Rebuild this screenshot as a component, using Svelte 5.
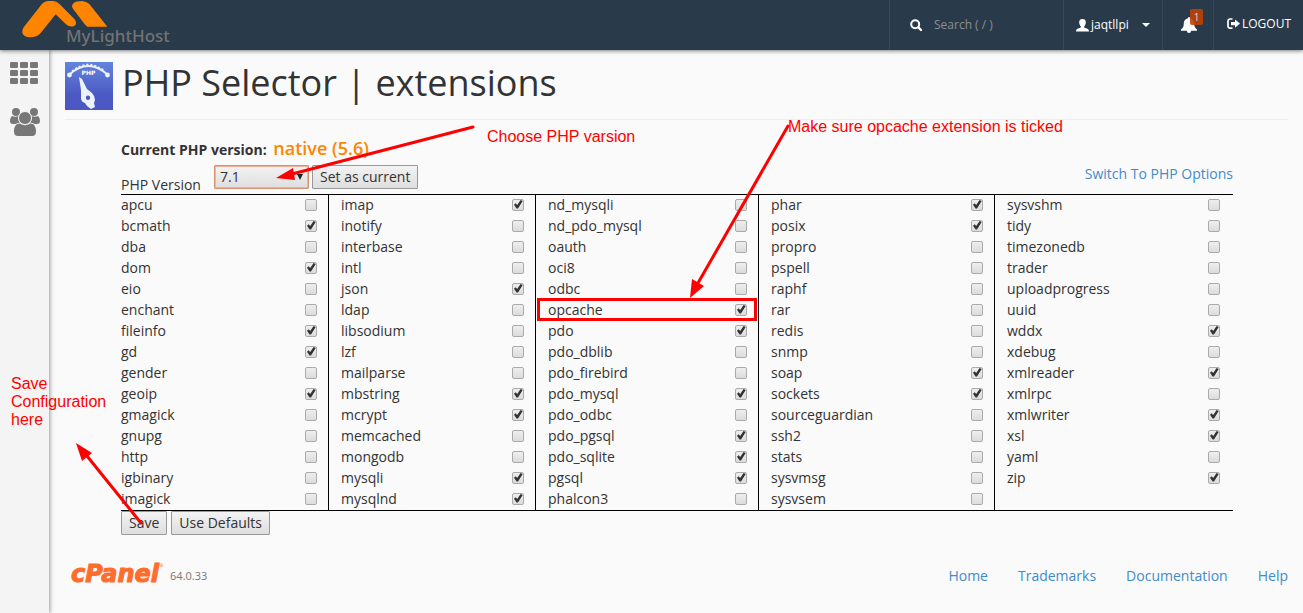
<!--
    PHP Selector page: pick a PHP version, tick its extensions, save.
    The red notes on top walk the reader through the three steps.
-->
<script lang="ts">
    const COLUMNS: string[][] = [
        ["apcu", "bcmath", "dba", "dom", "eio", "enchant", "fileinfo", "gd", "gender", "geoip", "gmagick", "gnupg", "http", "igbinary", "imagick"],
        ["imap", "inotify", "interbase", "intl", "json", "ldap", "libsodium", "lzf", "mailparse", "mbstring", "mcrypt", "memcached", "mongodb", "mysqli", "mysqlnd"],
        ["nd_mysqli", "nd_pdo_mysql", "oauth", "oci8", "odbc", "opcache", "pdo", "pdo_dblib", "pdo_firebird", "pdo_mysql", "pdo_odbc", "pdo_pgsql", "pdo_sqlite", "pgsql", "phalcon3"],
        ["phar", "posix", "propro", "pspell", "raphf", "rar", "redis", "snmp", "soap", "sockets", "sourceguardian", "ssh2", "stats", "sysvmsg", "sysvsem"],
        ["sysvshm", "tidy", "timezonedb", "trader", "uploadprogress", "uuid", "wddx", "xdebug", "xmlreader", "xmlrpc", "xmlwriter", "xsl", "yaml", "zip"]
    ]

    const DEFAULTS = [
        "bcmath", "dom", "fileinfo", "gd", "geoip",
        "imap", "json", "mbstring", "mcrypt", "mysqli", "mysqlnd",
        "opcache", "pdo", "pdo_mysql", "pdo_pgsql", "pdo_sqlite", "pgsql",
        "phar", "posix", "soap", "sockets",
        "wddx", "xmlreader", "xmlwriter", "xsl", "zip"
    ]

    const FOOTER_LINKS = ["Home", "Trademarks", "Documentation", "Help"]

    let version = $state("7.1")
    let enabled: string[] = $state([...DEFAULTS])

    function useDefaults(): void {
        enabled = [...DEFAULTS]
    }
</script>

<div class="page">
    <header class="topbar">
        <a class="brand" href="#home" aria-label="MyLightHost">
            <svg width="90" height="40" viewBox="0 0 270 120" aria-hidden="true">
                <path d="M4 83 58 14Q67 3 80 3H94Q106 4 113 13L158 58Q168 72 155 79 142 82 132 73L101 43 56 99Q45 112 24 112 5 111 1 98 0 90 4 83Z" />
                <path d="M153 26Q146 16 156 8 163 3 180 3 194 4 202 12L256 80H196Q188 74 183 66Z" />
            </svg>
            <span>MyLightHost</span>
        </a>
        <div class="tools">
            <label class="search">
                <svg width="13" height="13" viewBox="0 0 13 13" aria-hidden="true">
                    <circle cx="5.2" cy="5.2" r="4" fill="none" stroke="#fff" stroke-width="2" />
                    <path d="M8.5 8.5 11 11" stroke="#fff" stroke-width="2.4" stroke-linecap="round" />
                </svg>
                <input type="text" placeholder="Search ( / )" aria-label="Search" />
            </label>
            <button type="button" class="user">
                <svg width="13" height="13" viewBox="0 0 13 13" aria-hidden="true">
                    <path fill="#fff" d="M6.5 0C9 0 10 1.5 9.8 3.8 9.7 5.4 9 6.6 8.2 7.3V8.5L12 10Q13 10.5 13 12.5H0Q0 10.5 1 10L4.8 8.5V7.3C4 6.6 3.3 5.4 3.2 3.8 3 1.5 4 0 6.5 0Z" />
                </svg>
                <span>jaqtllpi</span>
                <svg class="caret" width="8" height="4" viewBox="0 0 8 4" aria-hidden="true"><path fill="#fff" d="M0 0H8L4 4Z" /></svg>
            </button>
            <button type="button" class="bell" aria-label="Notifications">
                <svg width="16" height="16" viewBox="0 0 16 16" aria-hidden="true">
                    <path fill="#fff" d="M8 0Q9 0 9 1.2C12 1.8 13.2 4 13.2 6.5 13.2 9.5 14 11 16 12.5V13.7H0V12.5C2 11 2.8 9.5 2.8 6.5 2.8 4 4 1.8 7 1.2Q7 0 8 0ZM5.8 13.5H10.2Q10 16 8 16T5.8 13.5Z" />
                </svg>
                <span class="count">1</span>
            </button>
            <a class="logout" href="#logout">
                <svg width="13" height="12" viewBox="0 0 13 12" aria-hidden="true">
                    <path fill="none" stroke="#fff" stroke-width="1.7" d="M5.5 1H3.3Q1 1 1 3.3V8Q1 10.2 3.3 10.2H5.5" />
                    <path fill="#fff" d="M4 4H8V1.4L13 5.6 8 9.8V7.2H4Z" />
                </svg>
                <span>LOGOUT</span>
            </a>
        </div>
    </header>

    <div class="body">
        <nav class="sidebar">
            <a href="#home" aria-label="Home">
                <svg width="28" height="22" viewBox="0 0 28 22" aria-hidden="true">
                    {#each [0, 8, 16] as y}
                        {#each [0, 10, 20] as x}
                            <rect {x} {y} width="8" height="6" rx="1.3" />
                        {/each}
                    {/each}
                </svg>
            </a>
            <a href="#users" aria-label="User manager">
                <svg width="30" height="28" viewBox="0 0 30 28" aria-hidden="true">
                    <circle cx="6" cy="4" r="4" />
                    <circle cx="24" cy="4" r="4" />
                    <path d="M2 8Q5 9.5 8.5 8C8 11 8.5 13 10 14.5Q7 14.5 5.5 16H3Q0 16 0 13 0 9.5 2 8ZM28 8Q25 9.5 21.5 8C22 11 21.5 13 20 14.5Q23 14.5 24.5 16H27Q30 16 30 13 30 9.5 28 8Z" />
                    <circle cx="15" cy="10" r="6.5" stroke="#f4f4f4" />
                    <path d="M9.5 15.5Q15 19 20.5 15.5C24 15.5 26 19 26 23.5Q26 28 22 28H8Q4 28 4 23.5C4 19 6 15.5 9.5 15.5Z" />
                </svg>
            </a>
        </nav>

        <div class="content">
            <main>
                <div class="title">
                    <svg width="48" height="48" viewBox="0 0 48 48" aria-hidden="true">
                        <defs>
                            <linearGradient id="tile" x1="0" y1="0" x2="0" y2="1">
                                <stop offset="0" stop-color="#6384dc" />
                                <stop offset=".7" stop-color="#4b59c2" />
                                <stop offset="1" stop-color="#4b58c4" />
                            </linearGradient>
                        </defs>
                        <rect width="48" height="48" fill="url(#tile)" />
                        <path d="M4 13Q23 -5 43 13" fill="none" stroke="#eef2fd" stroke-width="2" />
                        <path d="M7 9.5Q23 -4 40 9.5" fill="none" stroke="#eef2fd" stroke-width="2" stroke-dasharray="2 2" />
                        <circle cx="4.5" cy="13" r="2.4" fill="#eef2fd" />
                        <circle cx="42.5" cy="13" r="2.4" fill="#eef2fd" />
                        <text x="23.5" y="13" text-anchor="middle" font-family="DejaVu Sans, sans-serif" font-size="6" font-weight="700" fill="#fff">PHP</text>
                        <path fill="#eef2fd" fill-rule="evenodd" d="M14 15 17 17 22 27 27 31Q30 34 30 38L29 41 30 45 26 47 22 44 20 41Q16 40 16 36L16 28ZM23 33.5A2.2 2.2 0 1 0 23 37.9 2.2 2.2 0 0 0 23 33.5Z" />
                    </svg>
                    <h1>PHP Selector | extensions</h1>
                </div>

                <form onsubmit={(e) => e.preventDefault()}>
                    <p class="current">Current PHP version: <strong>native (5.6)</strong></p>
                    <div class="controls">
                        <label for="version">PHP Version</label>
                        <div class="picker">
                            <select id="version" bind:value={version}>
                                <option>5.6</option>
                                <option>7.0</option>
                                <option>7.1</option>
                            </select>
                        </div>
                        <button type="button">Set as current</button>
                        <a href="#options">Switch To PHP Options</a>
                    </div>

                    <div class="extensions">
                        {#each COLUMNS as column}
                            <ul>
                                {#each column as name (name)}
                                    <li class:marked={name === "opcache"}>
                                        <label>
                                            <span>{name}</span>
                                            <input type="checkbox" value={name} bind:group={enabled} />
                                        </label>
                                    </li>
                                {/each}
                            </ul>
                        {/each}
                    </div>

                    <div class="actions">
                        <button type="submit">Save</button>
                        <button type="button" onclick={useDefaults}>Use Defaults</button>
                    </div>
                </form>
            </main>

            <footer>
                <a class="cpanel" href="#cpanel">cPanel<sup>®</sup></a>
                <span class="release">64.0.33</span>
                <nav>
                    {#each FOOTER_LINKS as link}
                        <a href="#{link.toLowerCase()}">{link}</a>
                    {/each}
                </nav>
            </footer>
        </div>
    </div>

    <!-- walkthrough notes and arrows, drawn over the page -->
    <svg class="arrows" width="830" height="540" viewBox="0 0 830 540" aria-hidden="true">
        <g fill="none" stroke="#f00" stroke-width="3" stroke-linecap="round">
            <path d="M473 127 292 174" />
            <path d="M788 126 698 283" />
            <path d="M141 523 87 456" />
        </g>
        <g fill="#f00">
            <path d="M276 178 293 168 295 180Z" />
            <path d="M690 298 692 279 704 286Z" />
            <path d="M76 443 92 453 82 461Z" />
        </g>
    </svg>
    <p class="note choose">Choose PHP varsion</p>
    <p class="note tick">Make sure opcache extension is ticked</p>
    <p class="note save">Save Configuration here</p>
</div>

<style>
    :global(body) {
        background: #fafafa;
    }
    .page {
        position: relative;
        display: flex;
        flex-direction: column;
        min-height: 100vh;
        overflow: hidden;
        color: #333;
        font-family: "Open Sans", "Noto Sans", sans-serif;
        font-size: 14px;
        line-height: 20px;
    }
    a {
        color: #428bca;
        text-decoration: none;
    }
    button,
    select,
    input {
        font: inherit;
        color: inherit;
    }
    h1,
    p,
    ul {
        margin: 0;
        padding: 0;
    }

    .topbar {
        position: relative;
        z-index: 1;
        display: flex;
        justify-content: space-between;
        height: 50px;
        background: #293a4a;
        box-shadow: 0 1px 4px rgba(0, 0, 0, 0.5);
        color: #fff;
        font-size: 12px;
    }
    .brand {
        position: relative;
        margin-left: 22px;
    }
    .brand svg {
        display: block;
        fill: #ff8500;
    }
    .brand span {
        position: absolute;
        top: 26px;
        left: 44px;
        color: #737373;
        font-family: "Noto Sans", sans-serif;
        font-size: 17px;
        font-weight: 500;
    }
    .tools {
        display: flex;
    }
    .tools > * {
        box-sizing: border-box;
        display: flex;
        align-items: center;
        border: 0;
        border-left: 1px solid #384959;
        background: none;
        color: #fff;
    }
    .search {
        width: 174px;
        padding: 0 20px;
        gap: 11px;
    }
    .search svg {
        flex: none;
    }
    .search input {
        width: 100%;
        min-width: 0;
        padding: 0;
        border: 0;
        background: none;
        outline: none;
    }
    .search input::placeholder {
        color: #8a8f94;
    }
    .user {
        width: 99px;
        padding: 0 12px;
        gap: 2px;
    }
    .user .caret {
        margin-left: auto;
    }
    .bell {
        position: relative;
        width: 51px;
        padding: 0 18px;
    }
    .bell svg {
        flex: none;
    }
    .bell .count {
        position: absolute;
        top: 9px;
        left: 27px;
        width: 13px;
        background: rgba(190, 64, 4, 0.9);
        border-radius: 2px;
        color: #ddd;
        font-size: 10px;
        line-height: 16px;
        text-align: center;
    }
    .logout {
        width: 90px;
        padding: 0 0 3px 13px;
        gap: 2px;
    }

    .body {
        display: flex;
        flex: 1;
    }
    .sidebar {
        display: flex;
        flex-direction: column;
        flex: none;
        gap: 24px;
        box-sizing: border-box;
        width: 49px;
        padding: 12px 0 0 10px;
        background: #f4f4f4;
        box-shadow: 1px 0 4px rgba(0, 0, 0, 0.4);
    }
    .sidebar svg {
        display: block;
        fill: #777;
    }

    .content {
        flex: 1;
        min-width: 0;
        padding: 0 15px 0 16px;
    }
    .title {
        display: flex;
        gap: 9px;
        padding: 12px 0 9px;
        border-bottom: 1px solid #eee;
    }
    h1 {
        font-size: 36px;
        font-weight: 400;
        line-height: 42px;
    }
    form {
        margin: 19px 55px 0 56px;
    }
    .current {
        font-weight: 700;
    }
    .current strong {
        margin-left: 3px;
        color: #ff8500;
        font-size: 18px;
        font-weight: 600;
        line-height: 18px;
    }
    .controls {
        display: flex;
        align-items: flex-start;
        height: 29px;
        padding-top: 5px;
    }
    .controls label {
        width: 93px;
        padding-top: 10px;
        line-height: 20px;
    }
    .picker {
        position: relative;
        margin-right: 3px;
    }
    .picker::after {
        content: "";
        position: absolute;
        top: 9px;
        right: 6px;
        border: 3px solid transparent;
        border-top: 6px solid #222;
        border-bottom: 0;
        pointer-events: none;
    }
    select {
        appearance: none;
        display: block;
        box-sizing: border-box;
        width: 95px;
        height: 24px;
        padding: 0 5px;
        border: 1px solid #d9906f;
        border-radius: 1px;
        background: linear-gradient(#f3f3f3, #dedede);
        box-shadow: inset 0 0 0 1px #eeb39a;
    }
    form button {
        box-sizing: border-box;
        height: 24px;
        padding: 0 7px;
        border: 1px solid #999;
        border-radius: 1px;
        background: linear-gradient(#f3f3f3, #dedede);
        line-height: 20px;
    }
    .controls a {
        margin-left: auto;
        line-height: 18px;
    }

    .extensions {
        display: grid;
        grid-template-columns: 208fr 207fr 223fr 236fr 238fr;
        border: 1px solid #000;
        border-width: 1px 0;
    }
    ul {
        list-style: none;
        border-right: 1px solid #000;
    }
    ul:last-child {
        border-right: 0;
    }
    li {
        position: relative;
    }
    li label {
        display: flex;
        align-items: center;
        justify-content: space-between;
        box-sizing: border-box;
        height: 21px;
        padding: 0 11px 2px 12px;
    }
    ul:first-child label {
        padding-left: 0;
    }
    ul:last-child label {
        padding-right: 13px;
    }
    input[type="checkbox"] {
        appearance: none;
        box-sizing: border-box;
        width: 12px;
        height: 12px;
        margin: 0;
        border: 1px solid #aaa;
        border-radius: 2px;
        background: linear-gradient(#eee, #dcdcdc);
    }
    input[type="checkbox"]:checked::after {
        content: "";
        display: block;
        width: 10px;
        height: 10px;
        background: #333;
        clip-path: polygon(10% 52%, 26% 38%, 42% 55%, 76% 4%, 97% 16%, 50% 90%, 36% 90%);
    }
    .marked::after {
        content: "";
        position: absolute;
        inset: -2px 1px 0;
        border: 3px solid #f00;
        pointer-events: none;
    }
    .actions {
        display: flex;
        gap: 4px;
    }

    footer {
        display: flex;
        align-items: center;
        margin-top: 25px;
        padding-left: 6px;
    }
    .cpanel {
        padding-bottom: 3px;
        color: #ff6c2c;
        font-family: "DejaVu Sans", sans-serif;
        font-size: 24px;
        font-style: italic;
        font-weight: 700;
        line-height: 29px;
        -webkit-text-stroke: 1px #ff6c2c;
    }
    .cpanel sup {
        font-size: 5px;
        font-weight: 400;
        vertical-align: 15px;
        line-height: 0;
        -webkit-text-stroke: 0;
    }
    .release {
        margin-left: 6px;
        color: #777;
        font-size: 11px;
    }
    footer nav {
        display: flex;
        gap: 30px;
        margin-left: auto;
    }

    .arrows {
        position: absolute;
        z-index: 2;
        top: 0;
        left: 0;
        pointer-events: none;
    }
    .note {
        position: absolute;
        z-index: 2;
        color: #f00;
        font-family: "Liberation Sans", Arial, sans-serif;
        font-size: 16px;
        line-height: 18px;
    }
    .choose {
        top: 128px;
        left: 487px;
    }
    .tick {
        top: 118px;
        left: 788px;
    }
    .save {
        top: 375px;
        left: 11px;
        width: 100px;
    }
</style>
